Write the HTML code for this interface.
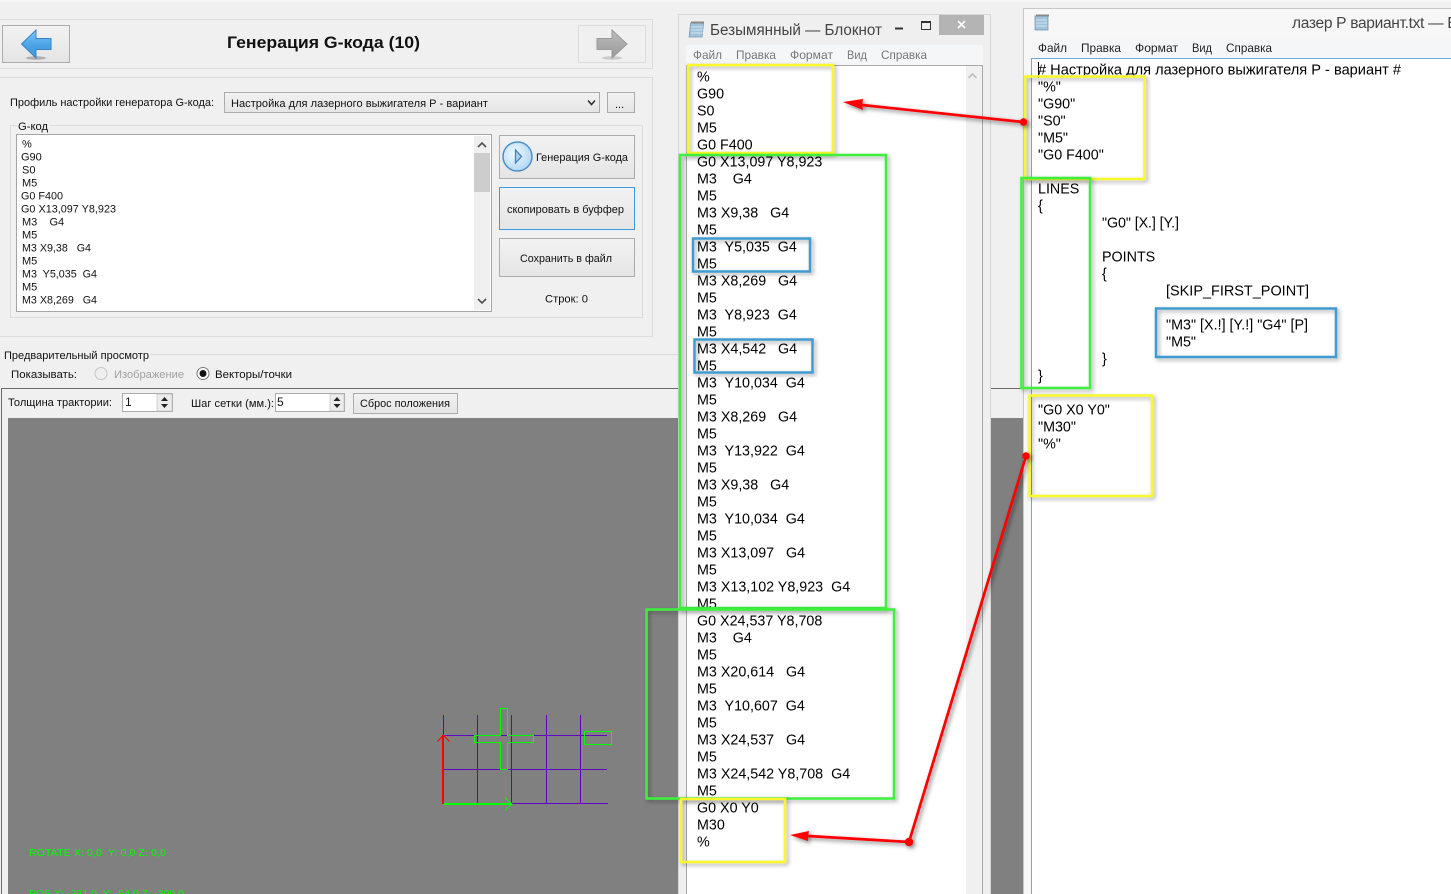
<!DOCTYPE html>
<html><head><meta charset="utf-8"><style>
html,body{margin:0;padding:0;background:#f0f0f0;width:1451px;height:894px;overflow:hidden}
svg{display:block;font-family:"Liberation Sans",sans-serif}
text{white-space:pre}
.s{font-size:11px;fill:#111}
.n{font-size:14.3px;fill:#000;transform:translateY(-.5px)}
.m1{font-size:12px;fill:#777}
.m2{font-size:12px;fill:#222}
.box{fill:none;stroke-width:2.5;filter:url(#sh)}
</style></head><body>
<svg width="1451" height="894" viewBox="0 0 1451 894" xmlns="http://www.w3.org/2000/svg">
<defs>
<filter id="sh" x="-10%" y="-10%" width="125%" height="125%"><feDropShadow dx="2" dy="2" stdDeviation="2" flood-color="#000" flood-opacity=".35"/></filter>
<filter id="sh2" x="-10%" y="-10%" width="125%" height="125%"><feDropShadow dx="2" dy="2" stdDeviation="2" flood-color="#000" flood-opacity=".5"/></filter>
<linearGradient id="btn" x1="0" y1="0" x2="0" y2="1"><stop offset="0" stop-color="#f2f2f2"/><stop offset="1" stop-color="#e5e5e5"/></linearGradient>
<linearGradient id="blue" x1="0" y1="0" x2="0" y2="1"><stop offset="0" stop-color="#7cc6f5"/><stop offset=".55" stop-color="#4aa3e6"/><stop offset="1" stop-color="#3f97de"/></linearGradient>
<linearGradient id="gr" x1="0" y1="0" x2="0" y2="1"><stop offset="0" stop-color="#bdbdbd"/><stop offset="1" stop-color="#9a9a9a"/></linearGradient>
<radialGradient id="pl" cx=".4" cy=".4" r=".7"><stop offset="0" stop-color="#f3f9fe"/><stop offset="1" stop-color="#a9d3f3"/></radialGradient>
</defs>

<rect width="1451" height="894" fill="#f0f0f0"/>
<rect x="0" y="0" width="1451" height="2" fill="#f6f6f6"/>

<!-- header panel -->
<rect x="-2" y="19.5" width="654.5" height="49" fill="#f0f0f0" stroke="#dcdcdc"/>
<rect x="2.5" y="25.5" width="67" height="37" fill="url(#btn)" stroke="#acacac"/>
<ellipse cx="36" cy="58" rx="10" ry="1.8" fill="#999" opacity=".7"/>
<path d="M21.5 44 L36 30 V38.5 H51 V49.5 H36 V58 Z" fill="url(#blue)" stroke="#3a82c4"/>
<rect x="578.5" y="25.5" width="67" height="37" fill="#f0f0f0" stroke="#dcdcdc"/>
<ellipse cx="612" cy="58" rx="10" ry="1.8" fill="#bbb" opacity=".7"/>
<path d="M627 44 L612 30 V38.5 H597 V49.5 H612 V58 Z" fill="url(#gr)" stroke="#999"/>
<text x="227" y="48" font-size="17" font-weight="bold" fill="#111" textLength="193" lengthAdjust="spacingAndGlyphs">Генерация G-кода (10)</text>

<!-- profile panel -->
<rect x="-2" y="77.5" width="654.5" height="259" fill="#f0f0f0" stroke="#dcdcdc"/>
<text class="s" x="10" y="106" textLength="204" lengthAdjust="spacingAndGlyphs">Профиль настройки генератора G-кода:</text>
<rect x="224.5" y="92.5" width="375" height="20" fill="url(#btn)" stroke="#acacac"/>
<text class="s" x="231" y="107" textLength="257" lengthAdjust="spacingAndGlyphs">Настройка для лазерного выжигателя Р - вариант</text>
<path d="M588 100.5 l3.5 4 l3.5 -4" fill="none" stroke="#333" stroke-width="1.6"/>
<rect x="607.5" y="92.5" width="27" height="20" fill="url(#btn)" stroke="#acacac"/>
<text class="s" x="615" y="108">...</text>

<rect x="10.5" y="125.5" width="632" height="192" fill="none" stroke="#dcdcdc"/>
<rect x="17" y="120" width="32" height="12" fill="#f0f0f0"/>
<text class="s" x="18" y="130" textLength="30" lengthAdjust="spacingAndGlyphs">G-код</text>
<rect x="16.5" y="134.5" width="475" height="177" fill="#fff" stroke="#a5a5a5"/>
<rect x="474" y="136" width="16" height="174" fill="#f0f0f0"/>
<rect x="474" y="153" width="16" height="39" fill="#cdcdcd"/>
<path d="M478 147 l4 -4 l4 4" fill="none" stroke="#505050" stroke-width="1.6"/>
<path d="M478 299 l4 4 l4 -4" fill="none" stroke="#505050" stroke-width="1.6"/>
<g font-size="11" fill="#111" transform="translate(0 -.5)">
<text x="22" y="148">%</text>
<text x="21" y="161">G90</text>
<text x="22" y="174">S0</text>
<text x="22" y="187">M5</text>
<text x="21" y="200" textLength="42" lengthAdjust="spacingAndGlyphs">G0 F400</text>
<text x="21" y="213" textLength="95" lengthAdjust="spacingAndGlyphs">G0 X13,097 Y8,923</text>
<text x="22" y="226">M3    G4</text>
<text x="22" y="239">M5</text>
<text x="22" y="252" textLength="69" lengthAdjust="spacingAndGlyphs">M3 X9,38   G4</text>
<text x="22" y="265">M5</text>
<text x="22" y="278" textLength="75" lengthAdjust="spacingAndGlyphs">M3  Y5,035  G4</text>
<text x="22" y="291">M5</text>
<text x="22" y="304" textLength="75" lengthAdjust="spacingAndGlyphs">M3 X8,269   G4</text>
</g>
<rect x="499.5" y="135.5" width="135" height="43" fill="url(#btn)" stroke="#acacac"/>
<circle cx="517.5" cy="156.5" r="14.5" fill="url(#pl)" stroke="#4a90cc" stroke-width="1.5"/>
<path d="M515.5 150 L521.5 156.5 L515.5 163 Z" fill="#a9d3f3" stroke="#3f86c6" stroke-width="1.3"/>
<text class="s" x="536" y="161" textLength="92" lengthAdjust="spacingAndGlyphs">Генерация G-кода</text>
<rect x="499.5" y="187.5" width="135" height="42" fill="url(#btn)" stroke="#3c9be0"/>
<text class="s" x="507" y="213" textLength="117" lengthAdjust="spacingAndGlyphs">скопировать в буффер</text>
<rect x="499.5" y="238.5" width="135" height="38" fill="url(#btn)" stroke="#acacac"/>
<text class="s" x="520" y="262" textLength="92" lengthAdjust="spacingAndGlyphs">Сохранить в файл</text>
<text class="s" x="545" y="302.5" textLength="43" lengthAdjust="spacingAndGlyphs">Строк: 0</text>

<!-- preview -->
<line x1="150" y1="354.5" x2="680" y2="354.5" stroke="#dcdcdc"/>
<text class="s" x="4" y="359" textLength="145" lengthAdjust="spacingAndGlyphs">Предварительный просмотр</text>
<text class="s" x="11" y="378" textLength="66" lengthAdjust="spacingAndGlyphs">Показывать:</text>
<circle cx="101" cy="373.5" r="6" fill="#efefef" stroke="#c6c6c6"/>
<text x="114" y="378" font-size="11" fill="#a0a0a0" textLength="70" lengthAdjust="spacingAndGlyphs">Изображение</text>
<circle cx="203" cy="373.5" r="6" fill="#fff" stroke="#777"/>
<circle cx="203" cy="373.5" r="3.5" fill="#111"/>
<text class="s" x="215" y="378" textLength="77" lengthAdjust="spacingAndGlyphs">Векторы/точки</text>
<path d="M1.5 894 V388.5 H1024" fill="none" stroke="#6a6a6a"/>
<rect x="2" y="389" width="1022" height="505" fill="#f0f0f0"/>
<text class="s" x="8" y="406" textLength="104" lengthAdjust="spacingAndGlyphs">Толщина трактории:</text>
<rect x="122.5" y="393.5" width="50" height="18" fill="#fff" stroke="#acacac"/>
<text x="125" y="406" font-size="12" fill="#111">1</text>
<rect x="157" y="394" width="15" height="17" fill="#ececec" stroke="#bbb" stroke-width=".6"/>
<path d="M161 401 h7 l-3.5 -4 Z M161 404 h7 l-3.5 4 Z" fill="#222"/>
<text class="s" x="191" y="407" textLength="83" lengthAdjust="spacingAndGlyphs">Шаг сетки (мм.):</text>
<rect x="275.5" y="393.5" width="69" height="18" fill="#fff" stroke="#acacac"/>
<text x="277" y="406" font-size="12" fill="#111">5</text>
<rect x="330" y="394" width="14" height="17" fill="#ececec" stroke="#bbb" stroke-width=".6"/>
<path d="M333.500 401 h7 l-3.500 -4 Z M333.500 404 h7 l-3.500 4 Z" fill="#222"/>
<rect x="353.500" y="393.500" width="104" height="20" fill="url(#btn)" stroke="#acacac"/>
<text class="s" x="360" y="407" textLength="90" lengthAdjust="spacingAndGlyphs">Сброс положения</text>

<rect x="8" y="418" width="1016" height="476" fill="#808080"/>
<g stroke="#6000c0" stroke-width="1" fill="none">
<path d="M443.500 715 V803 M477.500 715 V803 M511.500 715 V803 M546.500 715 V803 M580.500 715 V803"/>
<path d="M443 735.500 H607 M443 769.500 H607 M443 803.500 H608"/>
</g>
<g stroke="#00ff00" stroke-width="1" fill="none">
<path d="M500.500 708.500 H507.500 V735.500 H533.500 V742.500 H507.500 V769.500 H500.500 V742.500 H474.500 V735.500 H500.500 Z"/>
<rect x="584.500" y="731.500" width="27" height="13"/>
<path d="M443 804 H511" stroke-width="2"/>
<path d="M505 797.500 L512 804 L505 810.500" stroke-width="1"/>
</g>
<g stroke="#ff0000" fill="none">
<path d="M443 804 V735" stroke-width="2"/>
<path d="M437.500 741.500 L443.500 735 L449.500 741.500" stroke-width="1"/>
</g>
<text x="29" y="856" font-size="10.500" fill="#00ff00" textLength="137" lengthAdjust="spacing">ROTATE X: 0,0  Y: 0,0 Z: 0,0</text>
<text x="29" y="897" font-size="10.500" fill="#00ff00" textLength="155" lengthAdjust="spacing">POS X: -231,0  Y: -54,0 Z: -300,0</text>

<!-- notepad 1 -->
<rect x="678.500" y="14.500" width="312" height="890" fill="#efefef" stroke="#d6d6d6"/>
<rect x="939" y="15" width="45" height="20" fill="#b4b4b4"/>
<path d="M958 21 l7 7 M965 21 l-7 7" stroke="#fff" stroke-width="1.600"/>
<rect x="895" y="27.500" width="8" height="2" fill="#333"/>
<rect x="921.500" y="21.500" width="9" height="8" fill="none" stroke="#333"/>
<rect x="921" y="21" width="10" height="2" fill="#333"/>
<g>
<rect x="690" y="23" width="13" height="14" fill="#9fc3dc" stroke="#7a9ab0" stroke-width=".8" transform="skewX(-6) translate(3 0)"/>
<path d="M691 27 h12 M691 30 h12 M691 33 h12" stroke="#e4eef5" stroke-width=".8"/>
<rect x="691" y="21.500" width="13" height="2" fill="#888"/>
</g>
<text x="710" y="35" font-size="15.500" fill="#444" textLength="172" lengthAdjust="spacingAndGlyphs">Безымянный — Блокнот</text>
<rect x="686" y="45" width="297" height="20" fill="#f5f6f7"/>
<text class="m1" x="693" y="59" textLength="29" lengthAdjust="spacingAndGlyphs">Файл</text>
<text class="m1" x="736" y="59" textLength="40" lengthAdjust="spacingAndGlyphs">Правка</text>
<text class="m1" x="790" y="59" textLength="43" lengthAdjust="spacingAndGlyphs">Формат</text>
<text class="m1" x="847" y="59" textLength="20" lengthAdjust="spacingAndGlyphs">Вид</text>
<text class="m1" x="881" y="59" textLength="46" lengthAdjust="spacingAndGlyphs">Справка</text>
<rect x="686.500" y="65.500" width="296" height="840" fill="#fff" stroke="#a8a8a8"/>
<rect x="966" y="66" width="16" height="828" fill="#f0f0f0"/>
<path d="M968.500 78 l4 -4 l4 4" fill="none" stroke="#c0c0c0" stroke-width="1.800"/>

<text class="n" x="697" y="82">%</text>
<text class="n" x="697" y="99">G90</text>
<text class="n" x="697" y="116">S0</text>
<text class="n" x="697" y="133">M5</text>
<text class="n" x="697" y="150">G0 F400</text>
<text class="n" x="697" y="167">G0 X13,097 Y8,923</text>
<text class="n" x="697" y="184">M3    G4</text>
<text class="n" x="697" y="201">M5</text>
<text class="n" x="697" y="218">M3 X9,38   G4</text>
<text class="n" x="697" y="235">M5</text>
<text class="n" x="697" y="252">M3  Y5,035  G4</text>
<text class="n" x="697" y="269">M5</text>
<text class="n" x="697" y="286">M3 X8,269   G4</text>
<text class="n" x="697" y="303">M5</text>
<text class="n" x="697" y="320">M3  Y8,923  G4</text>
<text class="n" x="697" y="337">M5</text>
<text class="n" x="697" y="354">M3 X4,542   G4</text>
<text class="n" x="697" y="371">M5</text>
<text class="n" x="697" y="388">M3  Y10,034  G4</text>
<text class="n" x="697" y="405">M5</text>
<text class="n" x="697" y="422">M3 X8,269   G4</text>
<text class="n" x="697" y="439">M5</text>
<text class="n" x="697" y="456">M3  Y13,922  G4</text>
<text class="n" x="697" y="473">M5</text>
<text class="n" x="697" y="490">M3 X9,38   G4</text>
<text class="n" x="697" y="507">M5</text>
<text class="n" x="697" y="524">M3  Y10,034  G4</text>
<text class="n" x="697" y="541">M5</text>
<text class="n" x="697" y="558">M3 X13,097   G4</text>
<text class="n" x="697" y="575">M5</text>
<text class="n" x="697" y="592">M3 X13,102 Y8,923  G4</text>
<text class="n" x="697" y="609">M5</text>
<text class="n" x="697" y="626">G0 X24,537 Y8,708</text>
<text class="n" x="697" y="643">M3    G4</text>
<text class="n" x="697" y="660">M5</text>
<text class="n" x="697" y="677">M3 X20,614   G4</text>
<text class="n" x="697" y="694">M5</text>
<text class="n" x="697" y="711">M3  Y10,607  G4</text>
<text class="n" x="697" y="728">M5</text>
<text class="n" x="697" y="745">M3 X24,537   G4</text>
<text class="n" x="697" y="762">M5</text>
<text class="n" x="697" y="779">M3 X24,542 Y8,708  G4</text>
<text class="n" x="697" y="796">M5</text>
<text class="n" x="697" y="813">G0 X0 Y0</text>
<text class="n" x="697" y="830">M30</text>
<text class="n" x="697" y="847">%</text>

<!-- notepad 2 -->
<rect x="1023.500" y="8.500" width="440" height="890" fill="#f7f7f7" stroke="#c8c8c8"/>
<g>
<rect x="1035" y="16" width="13" height="14" fill="#9fc3dc" stroke="#7a9ab0" stroke-width=".8"/>
<path d="M1036 20 h11 M1036 23 h11 M1036 26 h11" stroke="#e4eef5" stroke-width=".8"/>
<rect x="1036" y="14.500" width="13" height="2" fill="#888"/>
</g>
<text x="1292" y="28" font-size="15.500" fill="#444" textLength="212" lengthAdjust="spacing">лазер Р вариант.txt — Блокнот</text>
<rect x="1031" y="38" width="420" height="20" fill="#f5f6f7"/>
<text class="m2" x="1038" y="52" textLength="29" lengthAdjust="spacingAndGlyphs">Файл</text>
<text class="m2" x="1081" y="52" textLength="40" lengthAdjust="spacingAndGlyphs">Правка</text>
<text class="m2" x="1135" y="52" textLength="43" lengthAdjust="spacingAndGlyphs">Формат</text>
<text class="m2" x="1192" y="52" textLength="20" lengthAdjust="spacingAndGlyphs">Вид</text>
<text class="m2" x="1226" y="52" textLength="46" lengthAdjust="spacingAndGlyphs">Справка</text>
<rect x="1031.500" y="58.500" width="440" height="850" fill="#fff" stroke="#6fa8dc"/>
<line x1="1038.500" y1="62" x2="1038.500" y2="78" stroke="#000"/>

<text class="n" x="1038" y="75" textLength="363" lengthAdjust="spacingAndGlyphs"># Настройка для лазерного выжигателя Р - вариант #</text>
<text class="n" x="1038" y="92">"%"</text>
<text class="n" x="1038" y="109">"G90"</text>
<text class="n" x="1038" y="126">"S0"</text>
<text class="n" x="1038" y="143">"M5"</text>
<text class="n" x="1038" y="160">"G0 F400"</text>
<text class="n" x="1038" y="194">LINES</text>
<text class="n" x="1038" y="211">{</text>
<text class="n" x="1102" y="228" textLength="77" lengthAdjust="spacing">"G0" [X.] [Y.]</text>
<text class="n" x="1102" y="262">POINTS</text>
<text class="n" x="1102" y="279">{</text>
<text class="n" x="1166" y="296" textLength="143" lengthAdjust="spacingAndGlyphs">[SKIP_FIRST_POINT]</text>
<text class="n" x="1166" y="330" textLength="142" lengthAdjust="spacing">"M3" [X.!] [Y.!] "G4" [P]</text>
<text class="n" x="1166" y="347">"M5"</text>
<text class="n" x="1102" y="364">}</text>
<text class="n" x="1038" y="381">}</text>
<text class="n" x="1038" y="415">"G0 X0 Y0"</text>
<text class="n" x="1038" y="432">"M30"</text>
<text class="n" x="1038" y="449">"%"</text>

<!-- annotations -->
<rect class="box" x="688" y="65" width="145" height="88" stroke="#f8f82c"/>
<rect class="box" x="680" y="155" width="206" height="453" stroke="#3cf03c"/>
<rect class="box" x="693" y="238.500" width="117" height="33" stroke="#3f9bd0"/>
<rect class="box" x="694.500" y="339.500" width="118" height="33" stroke="#3f9bd0"/>
<rect class="box" x="646.500" y="609.500" width="247.500" height="189" stroke="#3cf03c"/>
<rect class="box" x="681" y="799" width="104" height="63" stroke="#f8f82c"/>
<rect class="box" x="1025" y="76.500" width="119.500" height="102.500" stroke="#f8f82c"/>
<rect class="box" x="1021.500" y="178" width="68.500" height="210" stroke="#3cf03c"/>
<rect class="box" x="1156" y="308.500" width="180" height="48.500" stroke="#3f9bd0"/>
<rect class="box" x="1029.500" y="395.500" width="122.500" height="100.500" stroke="#f8f82c"/>

<g filter="url(#sh2)" fill="#f00">
<path d="M1023 122 L862 105" stroke="#f00" stroke-width="2.700" fill="none"/>
<path d="M843 102 L863 99 L862 105 L863 110 Z"/>
<circle cx="1023.500" cy="122" r="3.800"/>
<path d="M1026 456 L909 842 L808 836" stroke="#f00" stroke-width="2.700" fill="none"/>
<path d="M790 835 L809 831 L808 836 L808 841 Z"/>
<circle cx="1026" cy="456" r="3.800"/>
<circle cx="909" cy="842" r="4.200"/>
</g>
</svg>
</body></html>
